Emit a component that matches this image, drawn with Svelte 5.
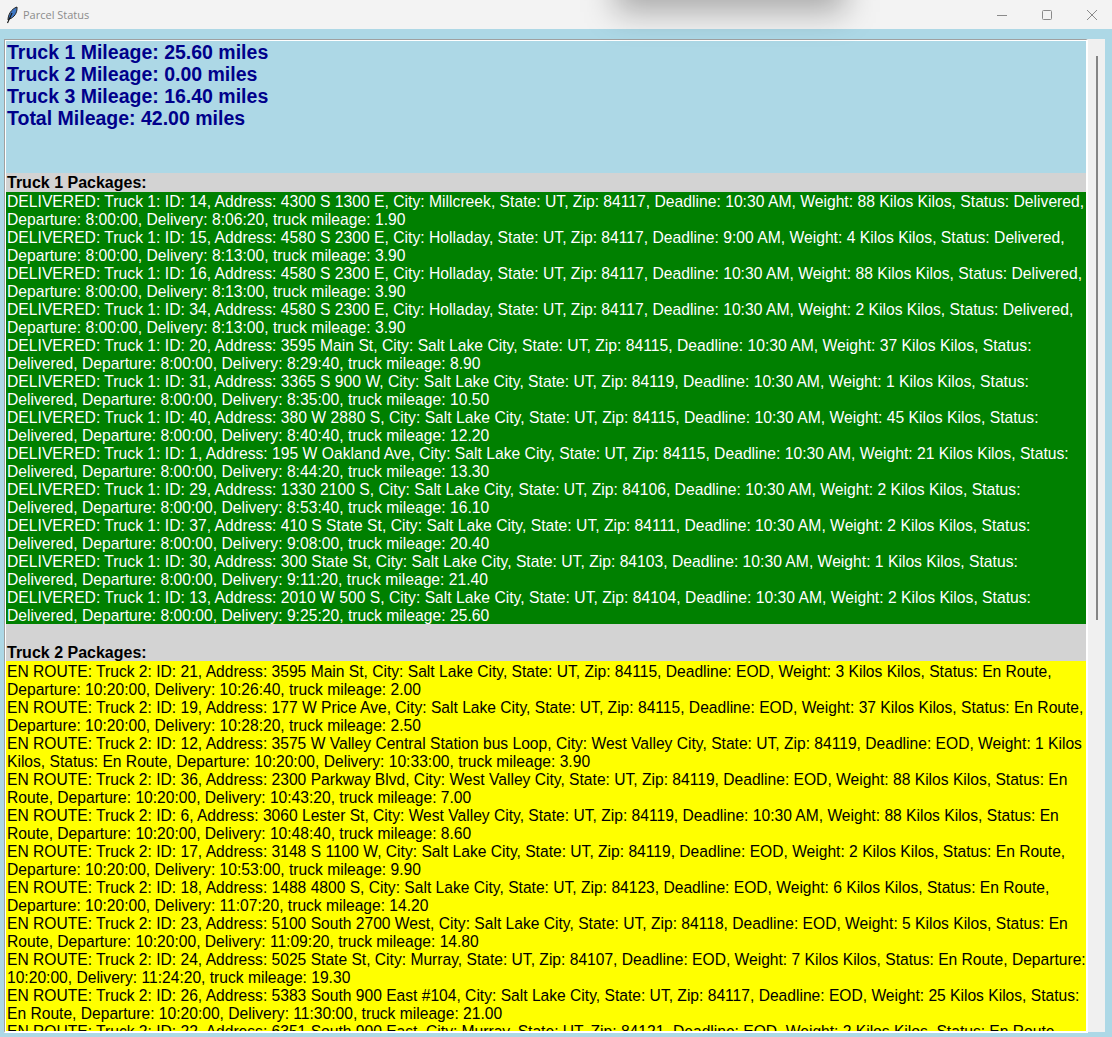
<script lang="ts">
  const mileage = [
    "Truck 1 Mileage: 25.60 miles",
    "Truck 2 Mileage: 0.00 miles",
    "Truck 3 Mileage: 16.40 miles",
    "Total Mileage: 42.00 miles"
  ];

  const truck1 = [
    "DELIVERED: Truck 1: ID: 14, Address: 4300 S 1300 E, City: Millcreek, State: UT, Zip: 84117, Deadline: 10:30 AM, Weight: 88 Kilos Kilos, Status: Delivered,",
    "Departure: 8:00:00, Delivery: 8:06:20, truck mileage: 1.90",
    "DELIVERED: Truck 1: ID: 15, Address: 4580 S 2300 E, City: Holladay, State: UT, Zip: 84117, Deadline: 9:00 AM, Weight: 4 Kilos Kilos, Status: Delivered,",
    "Departure: 8:00:00, Delivery: 8:13:00, truck mileage: 3.90",
    "DELIVERED: Truck 1: ID: 16, Address: 4580 S 2300 E, City: Holladay, State: UT, Zip: 84117, Deadline: 10:30 AM, Weight: 88 Kilos Kilos, Status: Delivered,",
    "Departure: 8:00:00, Delivery: 8:13:00, truck mileage: 3.90",
    "DELIVERED: Truck 1: ID: 34, Address: 4580 S 2300 E, City: Holladay, State: UT, Zip: 84117, Deadline: 10:30 AM, Weight: 2 Kilos Kilos, Status: Delivered,",
    "Departure: 8:00:00, Delivery: 8:13:00, truck mileage: 3.90",
    "DELIVERED: Truck 1: ID: 20, Address: 3595 Main St, City: Salt Lake City, State: UT, Zip: 84115, Deadline: 10:30 AM, Weight: 37 Kilos Kilos, Status:",
    "Delivered, Departure: 8:00:00, Delivery: 8:29:40, truck mileage: 8.90",
    "DELIVERED: Truck 1: ID: 31, Address: 3365 S 900 W, City: Salt Lake City, State: UT, Zip: 84119, Deadline: 10:30 AM, Weight: 1 Kilos Kilos, Status:",
    "Delivered, Departure: 8:00:00, Delivery: 8:35:00, truck mileage: 10.50",
    "DELIVERED: Truck 1: ID: 40, Address: 380 W 2880 S, City: Salt Lake City, State: UT, Zip: 84115, Deadline: 10:30 AM, Weight: 45 Kilos Kilos, Status:",
    "Delivered, Departure: 8:00:00, Delivery: 8:40:40, truck mileage: 12.20",
    "DELIVERED: Truck 1: ID: 1, Address: 195 W Oakland Ave, City: Salt Lake City, State: UT, Zip: 84115, Deadline: 10:30 AM, Weight: 21 Kilos Kilos, Status:",
    "Delivered, Departure: 8:00:00, Delivery: 8:44:20, truck mileage: 13.30",
    "DELIVERED: Truck 1: ID: 29, Address: 1330 2100 S, City: Salt Lake City, State: UT, Zip: 84106, Deadline: 10:30 AM, Weight: 2 Kilos Kilos, Status:",
    "Delivered, Departure: 8:00:00, Delivery: 8:53:40, truck mileage: 16.10",
    "DELIVERED: Truck 1: ID: 37, Address: 410 S State St, City: Salt Lake City, State: UT, Zip: 84111, Deadline: 10:30 AM, Weight: 2 Kilos Kilos, Status:",
    "Delivered, Departure: 8:00:00, Delivery: 9:08:00, truck mileage: 20.40",
    "DELIVERED: Truck 1: ID: 30, Address: 300 State St, City: Salt Lake City, State: UT, Zip: 84103, Deadline: 10:30 AM, Weight: 1 Kilos Kilos, Status:",
    "Delivered, Departure: 8:00:00, Delivery: 9:11:20, truck mileage: 21.40",
    "DELIVERED: Truck 1: ID: 13, Address: 2010 W 500 S, City: Salt Lake City, State: UT, Zip: 84104, Deadline: 10:30 AM, Weight: 2 Kilos Kilos, Status:",
    "Delivered, Departure: 8:00:00, Delivery: 9:25:20, truck mileage: 25.60"
  ];

  const truck2 = [
    "EN ROUTE: Truck 2: ID: 21, Address: 3595 Main St, City: Salt Lake City, State: UT, Zip: 84115, Deadline: EOD, Weight: 3 Kilos Kilos, Status: En Route,",
    "Departure: 10:20:00, Delivery: 10:26:40, truck mileage: 2.00",
    "EN ROUTE: Truck 2: ID: 19, Address: 177 W Price Ave, City: Salt Lake City, State: UT, Zip: 84115, Deadline: EOD, Weight: 37 Kilos Kilos, Status: En Route,",
    "Departure: 10:20:00, Delivery: 10:28:20, truck mileage: 2.50",
    "EN ROUTE: Truck 2: ID: 12, Address: 3575 W Valley Central Station bus Loop, City: West Valley City, State: UT, Zip: 84119, Deadline: EOD, Weight: 1 Kilos",
    "Kilos, Status: En Route, Departure: 10:20:00, Delivery: 10:33:00, truck mileage: 3.90",
    "EN ROUTE: Truck 2: ID: 36, Address: 2300 Parkway Blvd, City: West Valley City, State: UT, Zip: 84119, Deadline: EOD, Weight: 88 Kilos Kilos, Status: En",
    "Route, Departure: 10:20:00, Delivery: 10:43:20, truck mileage: 7.00",
    "EN ROUTE: Truck 2: ID: 6, Address: 3060 Lester St, City: West Valley City, State: UT, Zip: 84119, Deadline: 10:30 AM, Weight: 88 Kilos Kilos, Status: En",
    "Route, Departure: 10:20:00, Delivery: 10:48:40, truck mileage: 8.60",
    "EN ROUTE: Truck 2: ID: 17, Address: 3148 S 1100 W, City: Salt Lake City, State: UT, Zip: 84119, Deadline: EOD, Weight: 2 Kilos Kilos, Status: En Route,",
    "Departure: 10:20:00, Delivery: 10:53:00, truck mileage: 9.90",
    "EN ROUTE: Truck 2: ID: 18, Address: 1488 4800 S, City: Salt Lake City, State: UT, Zip: 84123, Deadline: EOD, Weight: 6 Kilos Kilos, Status: En Route,",
    "Departure: 10:20:00, Delivery: 11:07:20, truck mileage: 14.20",
    "EN ROUTE: Truck 2: ID: 23, Address: 5100 South 2700 West, City: Salt Lake City, State: UT, Zip: 84118, Deadline: EOD, Weight: 5 Kilos Kilos, Status: En",
    "Route, Departure: 10:20:00, Delivery: 11:09:20, truck mileage: 14.80",
    "EN ROUTE: Truck 2: ID: 24, Address: 5025 State St, City: Murray, State: UT, Zip: 84107, Deadline: EOD, Weight: 7 Kilos Kilos, Status: En Route, Departure:",
    "10:20:00, Delivery: 11:24:20, truck mileage: 19.30",
    "EN ROUTE: Truck 2: ID: 26, Address: 5383 South 900 East #104, City: Salt Lake City, State: UT, Zip: 84117, Deadline: EOD, Weight: 25 Kilos Kilos, Status:",
    "En Route, Departure: 10:20:00, Delivery: 11:30:00, truck mileage: 21.00",
    "EN ROUTE: Truck 2: ID: 22, Address: 6351 South 900 East, City: Murray, State: UT, Zip: 84121, Deadline: EOD, Weight: 2 Kilos Kilos, Status: En Route,"
  ];
</script>

<div class="window">
  <header class="titlebar">
    <svg class="feather" width="14" height="18" viewBox="0 0 14 18">
      <path d="M3 14 C3 9 6 3 12 1 C12.5 7 9 11.5 4.5 13 Z" fill="#3f78c4" stroke="#222" stroke-width="1"/>
      <path d="M2.5 17 L7 7" stroke="#111" stroke-width="1.1" fill="none"/>
    </svg>
    <span class="title">Parcel Status</span>
    <div class="controls">
      <svg width="12" height="12" viewBox="0 0 12 12"><path d="M1 6.5 H11" stroke="#8a8a8a" stroke-width="1"/></svg>
      <svg width="12" height="12" viewBox="0 0 12 12"><rect x="1.5" y="1.5" width="9" height="9" rx="1" fill="none" stroke="#8a8a8a"/></svg>
      <svg width="12" height="12" viewBox="0 0 12 12"><path d="M1 1 L11 11 M11 1 L1 11" stroke="#8a8a8a" stroke-width="1"/></svg>
    </div>
  </header>

  <main class="content">
    <div class="textbox">
      <div class="inner">
        <div class="summary">
          {#each mileage as line}
            <div>{line}</div>
          {/each}
        </div>

        <div class="heading first">Truck 1 Packages:</div>
        <div class="delivered">
          {#each truck1 as line}
            <div>{line}</div>
          {/each}
        </div>

        <div class="heading second">Truck 2 Packages:</div>
        <div class="enroute">
          {#each truck2 as line}
            <div>{line}</div>
          {/each}
        </div>
      </div>
    </div>

    <div class="scrollbar"><div class="thumb"></div></div>
  </main>

  <div class="shadow"></div>
</div>

<style>
  :global(body) {
    background: #add8e6;
  }

  .window {
    width: 1112px;
    height: 1037px;
    display: flex;
    flex-direction: column;
    overflow: hidden;
    position: relative;
    font-family: "Liberation Sans", Arial, sans-serif;
  }

  .titlebar {
    height: 29px;
    flex: none;
    background: #f3f3f3;
    display: flex;
    align-items: center;
    padding-left: 5px;
  }

  .feather {
    flex: none;
  }

  .title {
    margin-left: 4px;
    font-family: "Open Sans", "Noto Sans", sans-serif;
    font-size: 11px;
    color: #8c8c8c;
  }

  .controls {
    margin-left: auto;
    display: flex;
    gap: 33px;
    padding-right: 14px;
  }

  .shadow {
    position: absolute;
    left: 615px;
    top: -34px;
    width: 230px;
    height: 46px;
    background: rgba(0, 0, 0, 0.3);
    filter: blur(16px);
  }

  .content {
    flex: 1;
    min-height: 0;
    display: flex;
    align-items: flex-start;
    padding: 10px 7px 0 4px;
  }

  .textbox {
    width: 1084px;
    height: 994px;
    flex: none;
    box-sizing: border-box;
    border-top: 1px solid #a0a0a0;
    border-left: 1px solid #a0a0a0;
    border-right: 2px solid #fff;
    border-bottom: 2px solid #fff;
  }

  .inner {
    height: 100%;
    box-sizing: border-box;
    overflow: hidden;
    border-top: 1px solid #fff;
    border-left: 1px solid #fff;
    background: #add8e6;
    color: #000;
    font-size: 15.7px;
    line-height: 18px;
    white-space: nowrap;
  }

  .summary {
    height: 132px;
    padding-left: 1px;
    font-size: 19.5px;
    font-weight: bold;
    line-height: 22px;
    color: #00008b;
  }

  .heading {
    background: #d3d3d3;
    font-size: 16px;
    font-weight: bold;
    padding-left: 1px;
    display: flex;
    align-items: flex-end;
  }

  .first {
    height: 19px;
  }

  .second {
    height: 37px;
    line-height: 16px;
  }

  .delivered {
    background: #008000;
    color: #fff;
    height: 432px;
    box-sizing: border-box;
    padding: 1px 0 0 1px;
    overflow: hidden;
  }

  .enroute {
    background: #ffff00;
    color: #000;
    font-size: 15.62px;
    padding: 2px 0 0 1px;
  }

  .scrollbar {
    width: 17px;
    height: 993px;
    flex: none;
    background: #f0f0f0;
    box-sizing: border-box;
    padding: 17px 7px 0 8px;
  }

  .thumb {
    height: 564px;
    background: #858585;
  }
</style>
